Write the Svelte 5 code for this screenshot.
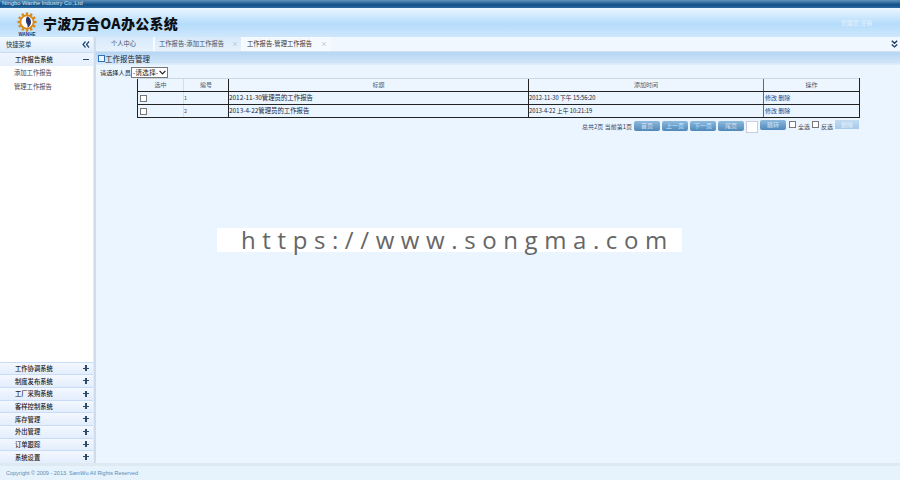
<script>
	const closed = ['工作协调系统', '制度发布系统', '工厂采购系统', '客样控制系统', '库存管理', '外出管理', '订单跟踪', '系统设置'];
	const rows = [
		{ id: 1, title: '2012-11-30管理员的工作报告', time: '2012-11-30 下午 15:56:20' },
		{ id: 2, title: '2013-4-22管理员的工作报告', time: '2013-4-22 上午 10:21:19' }
	];
	const pager = ['首页', '上一页', '下一页', '尾页'];
	const teeth = Array.from({ length: 12 }, (_, i) => i * 30);
</script>

<div class="page">
	<div class="strip">Ningbo Wanhe Industry Co.,Ltd</div>

	<header class="head">
		<div class="logo">
			<svg viewBox="0 0 24 24" width="20" height="20" aria-hidden="true">
				{#each teeth as a}
					<rect x="10.6" y="0.5" width="2.8" height="4" fill="#d98a1c" transform="rotate({a} 12 12)" />
				{/each}
				<circle cx="12" cy="12" r="9" fill="#d98a1c" />
				<circle cx="12" cy="12" r="6.8" fill="#fff" />
				<path d="M12 5.4c3.4 1 4.8 3.6 4.8 6.6s-1.400 5.600-4.800 6.600c1.600-2 .4-3.600-.6-5.200s-.8-5.800.6-8z" fill="#23346f" />
			</svg>
			<span>WANHE</span>
		</div>
		<h1>宁波万合OA办公系统</h1>
		<div class="user">管理员 注销</div>
	</header>

	<div class="body">
		<aside class="side">
			<div class="side-top">
				<span>快捷菜单</span>
				<svg viewBox="0 0 8 7" width="8" height="7" aria-hidden="true">
					<path d="M3.5 .5 1 3.5l2.5 3M7 .5 4.5 3.5 7 6.5" fill="none" stroke="#23466f" stroke-width="1.2" />
				</svg>
			</div>
			<div class="acc open"><span>工作报告系统</span><b class="minus"></b></div>
			<ul class="links">
				<li>添加工作报告</li>
				<li>管理工作报告</li>
			</ul>
			{#each closed as name}
				<div class="acc"><span>{name}</span><b class="plus"></b></div>
			{/each}
		</aside>

		<div class="split"></div>

		<main class="main">
			<nav class="tabs">
				<div class="tab first">个人中心</div>
				<div class="tab">工作报告-添加工作报告<i>×</i></div>
				<div class="tab on">工作报告-管理工作报告<i>×</i></div>
				<svg class="more" viewBox="0 0 7 8" width="7" height="8" aria-hidden="true">
					<path d="M.8 .8 3.5 3.3 6.2 .8M.8 4.4 3.5 6.9 6.2 4.4" fill="none" stroke="#1d3c63" stroke-width="1.4" />
				</svg>
			</nav>

			<div class="panel-title"><span class="pico"></span>工作报告管理</div>

			<div class="filter">
				<label for="who">请选择人员</label>
				<div class="pick">
					<select id="who"><option>-请选择-</option></select>
					<svg viewBox="0 0 7 5" width="7" height="5" aria-hidden="true">
						<path d="M.6 .8 3.500 3.800 6.400 .8" fill="none" stroke="#222" stroke-width="1.200" />
					</svg>
				</div>
			</div>

			<div class="content">
				<table>
					<thead>
						<tr>
							<th class="c1">选中</th>
							<th class="c2">编号</th>
							<th class="c3">标题</th>
							<th class="c4">添加时间</th>
							<th class="c5">操作</th>
						</tr>
					</thead>
					<tbody>
						{#each rows as r}
							<tr>
								<td class="c1"><span class="box"></span></td>
								<td class="c2 num">{r.id}</td>
								<td class="c3">{r.title}</td>
								<td class="c4 when">{r.time}</td>
								<td class="c5 ops">修改 删除</td>
							</tr>
						{/each}
					</tbody>
				</table>

				<div class="pager">
					<span class="count">总共2页 当前第1页</span>
					{#each pager as p}
						<span class="btn">{p}</span>
					{/each}
					<span class="jump"></span>
					<span class="btn go">跳转</span>
					<span class="box small"></span><span class="count">全选</span>
					<span class="box small"></span><span class="count">反选</span>
					<span class="btn del">删除</span>
				</div>
			</div>
		</main>
	</div>

	<footer class="foot">Copyright © 2009 - 2013. SamWu All Rights Reserved</footer>

	<div class="mark">https://www.songma.com</div>
</div>

<style>
	:global(body) {
		margin: 0;
	}

	.page {
		position: relative;
		width: 900px;
		height: 480px;
		display: flex;
		flex-direction: column;
		overflow: hidden;
		background: #eaf5ff;
		font-family: "Noto Sans CJK SC", "Liberation Sans", sans-serif;
		font-size: 6.3px;
		color: #333;
	}

	.strip {
		height: 8px;
		flex: none;
		padding-left: 2px;
		background: linear-gradient(#5f93bd, #0f4f86 60%, #2a6aa0);
		color: #d7e6f3;
		font: 5.8px/7px "Liberation Sans", sans-serif;
		box-sizing: border-box;
	}

	.head {
		height: 29px;
		flex: none;
		display: flex;
		align-items: center;
		background: linear-gradient(#eaf6ff, #b5dcfb 55%, #cfe7fc);
		padding-left: 17px;
		box-sizing: border-box;
	}

	.logo {
		width: 20px;
		display: flex;
		flex-direction: column;
		align-items: center;
		margin-top: 3px;
	}

	.logo svg {
		display: block;
	}

	.logo span {
		font: bold 4.6px/5px "Liberation Sans", sans-serif;
		color: #23346f;
		white-space: nowrap;
	}

	h1 {
		margin: 0 0 0 6px;
		font-size: 14px;
		line-height: 20px;
		font-weight: 900;
		color: #0b0f14;
		letter-spacing: 0.3px;
		white-space: nowrap;
	}

	.user {
		margin-left: auto;
		margin-right: 28px;
		color: #e6f2fd;
		font-size: 6px;
	}

	.body {
		flex: 1;
		display: flex;
		min-height: 0;
	}

	.side {
		width: 93px;
		flex: none;
		display: flex;
		flex-direction: column;
		background: #fff;
		color: #2c3a4a;
	}

	.side-top {
		height: 15px;
		flex: none;
		display: flex;
		align-items: center;
		justify-content: space-between;
		padding: 0 3px 0 6px;
		background: linear-gradient(#f3f9ff, #dcecfb);
	}

	.acc {
		height: 12.7px;
		flex: none;
		display: flex;
		align-items: center;
		justify-content: space-between;
		padding: 0 4px 0 15px;
		box-sizing: border-box;
		background: linear-gradient(#f4f8ff, #e3edfc);
		border-top: 1px solid #c9dcf5;
		color: #222;
		font-weight: 500;
	}

	.acc.open {
		height: 14px;
		background: linear-gradient(#eef5ff, #e6f0fd);
	}

	.minus,
	.plus {
		position: relative;
		width: 6px;
		height: 6px;
		background: linear-gradient(#2c4a6a, #2c4a6a) center / 6px 1.4px no-repeat;
	}

	.plus::after {
		content: "";
		position: absolute;
		left: 2.3px;
		top: 0;
		width: 1.4px;
		height: 6px;
		background: #2c4a6a;
	}

	.links {
		flex: 1;
		margin: 0;
		padding: 0 0 0 14px;
		list-style: none;
		color: #445;
	}

	.links li {
		height: 14px;
		line-height: 14px;
	}

	.split {
		width: 3px;
		flex: none;
		background: #cfdceb;
		border-left: 1px solid #e3eaf2;
		box-sizing: border-box;
	}

	.main {
		flex: 1;
		min-width: 0;
		display: flex;
		flex-direction: column;
	}

	.tabs {
		height: 15px;
		flex: none;
		display: flex;
		background: #f0f7ff;
		border-bottom: 1px solid #cfe2f6;
		box-sizing: border-box;
		position: relative;
	}

	.tab {
		padding-right: 3px;
		height: 14px;
		line-height: 14px;
		color: #3e5168;
		background: linear-gradient(#d8e9fa, #e6f2fd);
		border-right: 2px solid #f6fbff;
		display: flex;
		justify-content: space-between;
		padding-left: 4px;
		box-sizing: border-box;
		width: 88px;
		white-space: nowrap;
	}

	.tab.first {
		width: 59px;
		justify-content: center;
		padding-left: 0;
		padding-right: 2px;
	}

	.tab.on {
		background: #f4faff;
		color: #333;
		width: 87px;
		border-right: none;
	}

	.tab i {
		font-style: normal;
		color: #9fb2c5;
	}

	.more {
		position: absolute;
		right: 2px;
		top: 3px;
	}

	.panel-title {
		height: 13px;
		flex: none;
		display: flex;
		align-items: center;
		padding-left: 2px;
		background: linear-gradient(#b6d6f3, #cfe4f8 80%, #e2f0fc);
		color: #223;
		font-size: 7.5px;
		white-space: nowrap;
	}

	.pico {
		width: 5px;
		height: 5px;
		border: 1px solid #2e6fb5;
		background: #eaf5ff;
	}

	.filter {
		height: 14px;
		flex: none;
		display: flex;
		align-items: center;
		padding-left: 4px;
		color: #223;
		font-size: 6.2px;
	}

	.pick {
		position: relative;
		width: 37px;
		height: 11px;
	}

	.pick svg {
		position: absolute;
		right: 2px;
		top: 3px;
	}

	select {
		appearance: none;
		display: block;
		width: 37px;
		height: 11px;
		padding: 0 0 0 1px;
		margin: 0;
		box-sizing: border-box;
		font: 6.8px/9px "Noto Sans CJK SC", sans-serif;
		color: #222;
		background: #fff;
		border: 1px solid #777;
		border-radius: 0;
	}

	.content {
		width: 722px;
		margin-left: 41px;
	}

	table {
		width: 722px;
		table-layout: fixed;
		border-collapse: collapse;
		margin-top: -1px;
	}

	th,
	td {
		height: 13px;
		padding: 0;
		box-sizing: border-box;
		font-size: 6.4px;
		line-height: 12px;
		white-space: nowrap;
		overflow: hidden;
	}

	th {
		font-size: 6px;
		font-weight: 400;
		color: #4a5a6c;
		border-top: 1px solid #c8d8e8;
		border-bottom: 1px solid #222;
		text-align: center;
		background: #edf6ff;
	}

	td {
		border-bottom: 1px solid #222;
		background: #eaf5ff;
		color: #223;
	}

	.c1 {
		width: 46px;
		border-left: 1px solid #222;
	}

	.c2 {
		width: 45px;
		border-left: 1px solid #cfdff0;
	}

	.c3 {
		width: 300px;
		border-left: 1px solid #222;
	}

	.c4 {
		width: 235px;
		border-left: 1px solid #222;
	}

	.c5 {
		width: 96px;
		border-left: 1px solid #667;
		border-right: 1px solid #222;
	}

	td.c1 {
		padding-left: 2px;
	}

	td.when {
		font-size: 5.8px;
	}

	td.num {
		color: #556;
		font-size: 5.5px;
		border-left-color: #cfdff0;
	}

	td.ops {
		color: #1d4a8a;
		font-size: 6px;
		padding-left: 1px;
	}

	.box {
		display: inline-block;
		width: 7px;
		height: 7px;
		box-sizing: border-box;
		border: 1px solid #777;
		background: #fff;
		vertical-align: middle;
	}

	.pager {
		display: flex;
		justify-content: flex-end;
		align-items: flex-start;
		height: 16px;
		padding-top: 2px;
		box-sizing: border-box;
		font-size: 6px;
		color: #445;
	}

	.count {
		line-height: 14px;
		margin-right: 2px;
		white-space: nowrap;
	}

	.btn {
		width: 26px;
		height: 10px;
		margin: 1px 2px 0 0;
		border-radius: 2px;
		background: linear-gradient(#8fbade, #4f88bb);
		color: #cfe2f3;
		text-align: center;
		line-height: 10px;
		font-size: 6px;
	}

	.jump {
		width: 10px;
		height: 10px;
		margin: 1px 2px 0 0;
		background: #fff;
		border: 1px solid #ccd;
	}

	.go {
		margin: 0 3px 0 0;
	}

	.small {
		margin: 1px 2px 0 0;
	}

	.del {
		width: 24px;
		height: 9px;
		margin: 0;
		border-radius: 0;
		background: linear-gradient(#c2dcf2, #a5c9e8);
		color: #e4f0fa;
	}

	.foot {
		height: 17px;
		flex: none;
		padding-left: 6px;
		box-sizing: border-box;
		border-top: 3px solid #dfe9f1;
		background: #e6f3fc;
		color: #5a8ab5;
		font: 5.5px/14px "Liberation Sans", sans-serif;
	}

	.mark {
		position: absolute;
		left: 217px;
		top: 228px;
		width: 465px;
		height: 24px;
		background: #fff;
		color: #666;
		font: 24px/23px "Open Sans", sans-serif;
		letter-spacing: 6.6px;
		padding-left: 24px;
		box-sizing: border-box;
		white-space: nowrap;
	}
</style>
